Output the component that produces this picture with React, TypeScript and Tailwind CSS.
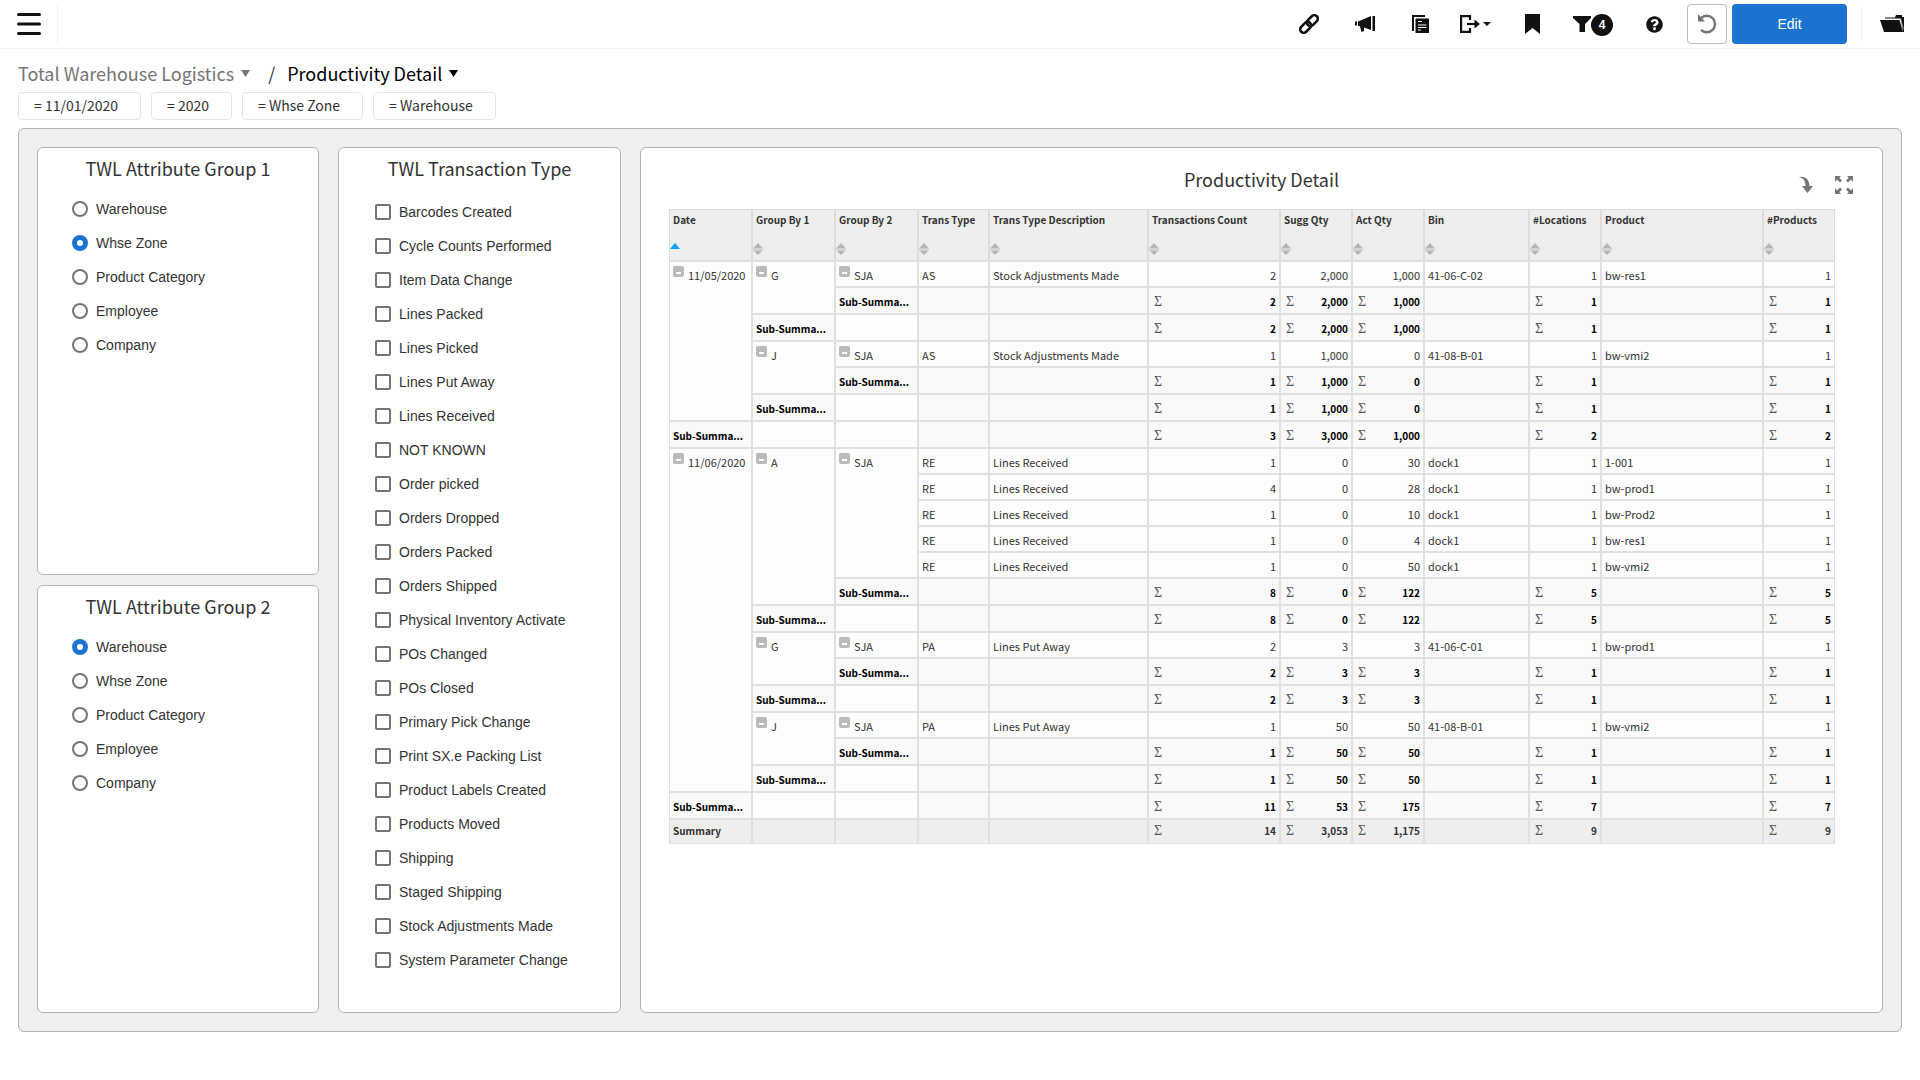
import { Fragment, type ReactNode } from "react";
import { FaQuestionCircle } from "react-icons/fa";

type Line = {
  type: string;
  description: string;
  count: number;
  sugg: number;
  act: number;
  bin: string;
  product: string;
};

type Group = {
  name: string;
  employee: string;
  lines: Line[];
};

type Day = {
  date: string;
  groups: Group[];
};

const chips = ["= 11/01/2020", "= 2020", "= Whse Zone", "= Warehouse"];

const attributes = [
  "Warehouse",
  "Whse Zone",
  "Product Category",
  "Employee",
  "Company",
];

const transactionTypes = [
  "Barcodes Created",
  "Cycle Counts Performed",
  "Item Data Change",
  "Lines Packed",
  "Lines Picked",
  "Lines Put Away",
  "Lines Received",
  "NOT KNOWN",
  "Order picked",
  "Orders Dropped",
  "Orders Packed",
  "Orders Shipped",
  "Physical Inventory Activate",
  "POs Changed",
  "POs Closed",
  "Primary Pick Change",
  "Print SX.e Packing List",
  "Product Labels Created",
  "Products Moved",
  "Shipping",
  "Staged Shipping",
  "Stock Adjustments Made",
  "System Parameter Change",
];

const columns = [
  { label: "Date", width: "w-[83px]" },
  { label: "Group By 1", width: "w-[83px]" },
  { label: "Group By 2", width: "w-[83px]" },
  { label: "Trans Type", width: "w-[71px]" },
  { label: "Trans Type Description", width: "w-[159px]" },
  { label: "Transactions Count", width: "w-[132px]" },
  { label: "Sugg Qty", width: "w-[72px]" },
  { label: "Act Qty", width: "w-[72px]" },
  { label: "Bin", width: "w-[105px]" },
  { label: "#Locations", width: "w-[72px]" },
  { label: "Product", width: "w-[162px]" },
  { label: "#Products", width: "w-[72px]" },
];

const received = {
  type: "RE",
  description: "Lines Received",
  sugg: 0,
  bin: "dock1",
};

const days: Day[] = [
  {
    date: "11/05/2020",
    groups: [
      {
        name: "G",
        employee: "SJA",
        lines: [
          { type: "AS", description: "Stock Adjustments Made", count: 2, sugg: 2000, act: 1000, bin: "41-06-C-02", product: "bw-res1" },
        ],
      },
      {
        name: "J",
        employee: "SJA",
        lines: [
          { type: "AS", description: "Stock Adjustments Made", count: 1, sugg: 1000, act: 0, bin: "41-08-B-01", product: "bw-vmi2" },
        ],
      },
    ],
  },
  {
    date: "11/06/2020",
    groups: [
      {
        name: "A",
        employee: "SJA",
        lines: [
          { ...received, count: 1, act: 30, product: "1-001" },
          { ...received, count: 4, act: 28, product: "bw-prod1" },
          { ...received, count: 1, act: 10, product: "bw-Prod2" },
          { ...received, count: 1, act: 4, product: "bw-res1" },
          { ...received, count: 1, act: 50, product: "bw-vmi2" },
        ],
      },
      {
        name: "G",
        employee: "SJA",
        lines: [
          { type: "PA", description: "Lines Put Away", count: 2, sugg: 3, act: 3, bin: "41-06-C-01", product: "bw-prod1" },
        ],
      },
      {
        name: "J",
        employee: "SJA",
        lines: [
          { type: "PA", description: "Lines Put Away", count: 1, sugg: 50, act: 50, bin: "41-08-B-01", product: "bw-vmi2" },
        ],
      },
    ],
  },
];

const fmt = (n: number) => n.toLocaleString("en-US");

const sum = (lines: Line[], key: "count" | "sugg" | "act") =>
  lines.reduce((total, line) => total + line[key], 0);

const dayLines = (day: Day) => day.groups.flatMap((g) => g.lines);

function Card({
  children,
  className = "",
}: {
  children: ReactNode;
  className?: string;
}) {
  return (
    <section
      className={`rounded-md border border-[#b3b3b3] bg-white ${className}`}
    >
      {children}
    </section>
  );
}

function RadioCard({
  title,
  name,
  selected,
}: {
  title: string;
  name: string;
  selected: string;
}) {
  return (
    <Card className="flex-1 pt-2">
      <h2 className="mb-3 text-center text-[18px] leading-6">{title}</h2>
      <div role="radiogroup" aria-label={title} className="pl-[34px]">
        {attributes.map((item) => (
          <label
            key={item}
            className="flex h-[34px] items-center gap-2 font-['Liberation_Sans',sans-serif] text-sm"
          >
            <input
              type="radio"
              name={name}
              defaultChecked={item === selected}
              className="size-4 appearance-none rounded-full border-2 border-[#757575] bg-white checked:border-5 checked:border-[#1a74cf]"
            />
            {item}
          </label>
        ))}
      </div>
    </Card>
  );
}

function TransactionCard() {
  return (
    <Card className="pt-2">
      <h2 className="mb-[15px] text-center text-[18px] leading-6">
        TWL Transaction Type
      </h2>
      <div className="pl-9">
        {transactionTypes.map((item) => (
          <label
            key={item}
            className="flex h-[34px] items-center gap-2 font-['Liberation_Sans',sans-serif] text-sm"
          >
            <input
              type="checkbox"
              className="size-4 appearance-none rounded-xs border-2 border-[#757575] bg-white checked:bg-[#1a74cf]"
            />
            {item}
          </label>
        ))}
      </div>
    </Card>
  );
}

function SortIcon({ active }: { active: boolean }) {
  if (active) {
    return (
      <svg width="10" height="12" viewBox="0 0 10 12" fill="#009ffb">
        <path d="M5 0 10 6H0z" />
      </svg>
    );
  }
  return (
    <svg width="10" height="12" viewBox="0 0 10 12" fill="#b5b5b5">
      <path d="M5 0 9.500 5H.5zM0 5.500h10v1H0zM.5 7.500h9L5 12z" />
    </svg>
  );
}

function Cell({
  children,
  className = "",
  rowSpan,
}: {
  children?: ReactNode;
  className?: string;
  rowSpan?: number;
}) {
  return (
    <td
      rowSpan={rowSpan}
      className={`overflow-hidden border border-[#e0e0e0] px-[3px] pt-0.5 whitespace-nowrap ${className}`}
    >
      {children}
    </td>
  );
}

function GroupCell({ label, rowSpan }: { label: string; rowSpan: number }) {
  return (
    <Cell rowSpan={rowSpan} className="bg-[#fdfdfd] align-top">
      <div className="flex items-start gap-1 pt-0.5">
        <button
          type="button"
          aria-label={`Collapse ${label}`}
          className="flex size-[11px] items-end justify-center rounded-xs bg-[#bbb] pb-[3px]"
        >
          <span className="h-0.5 w-[5px] bg-white" />
        </button>
        <span className="pt-px leading-4">{label}</span>
      </div>
    </Cell>
  );
}

function TotalCell({ value }: { value: number }) {
  return (
    <Cell>
      <div className="flex items-center justify-between pl-0.5">
        <span className="font-['Liberation_Serif',serif] text-sm leading-4 font-normal text-[#555]">
          Σ
        </span>
        <span>{fmt(value)}</span>
      </div>
    </Cell>
  );
}

function Totals({ lines }: { lines: Line[] }) {
  return (
    <>
      <Cell />
      <Cell />
      <TotalCell value={sum(lines, "count")} />
      <TotalCell value={sum(lines, "sugg")} />
      <TotalCell value={sum(lines, "act")} />
      <Cell />
      <TotalCell value={lines.length} />
      <Cell />
      <TotalCell value={lines.length} />
    </>
  );
}

const subRow = "h-[27px] bg-[#f9f9f9] font-bold text-black";

function DayRows({ day }: { day: Day }) {
  const lines = dayLines(day);
  // each group adds its own two sub-summary rows
  const daySpan = lines.length + day.groups.length * 2;

  return (
    <>
      {day.groups.map((group, gi) => (
        <Fragment key={group.name}>
          {group.lines.map((line, li) => (
            <tr
              key={line.product}
              className="h-[26px] bg-[#fdfdfd] text-[11px]"
            >
              {gi === 0 && li === 0 && (
                <GroupCell label={day.date} rowSpan={daySpan} />
              )}
              {li === 0 && (
                <GroupCell label={group.name} rowSpan={group.lines.length + 1} />
              )}
              {li === 0 && (
                <GroupCell label={group.employee} rowSpan={group.lines.length} />
              )}
              <Cell>{line.type}</Cell>
              <Cell>{line.description}</Cell>
              <Cell className="text-right">{line.count}</Cell>
              <Cell className="text-right">{fmt(line.sugg)}</Cell>
              <Cell className="text-right">{fmt(line.act)}</Cell>
              <Cell>{line.bin}</Cell>
              <Cell className="text-right">1</Cell>
              <Cell>{line.product}</Cell>
              <Cell className="text-right">1</Cell>
            </tr>
          ))}
          <tr className={subRow}>
            <Cell>Sub-Summa...</Cell>
            <Totals lines={group.lines} />
          </tr>
          <tr className={subRow}>
            <Cell>Sub-Summa...</Cell>
            <Cell className="bg-[#fdfdfd]" />
            <Totals lines={group.lines} />
          </tr>
        </Fragment>
      ))}
      <tr className={subRow}>
        <Cell>Sub-Summa...</Cell>
        <Cell className="bg-[#fdfdfd]" />
        <Cell className="bg-[#fdfdfd]" />
        <Totals lines={lines} />
      </tr>
    </>
  );
}

function ProductivityTable() {
  return (
    <table className="w-full table-fixed border-separate border-spacing-0 text-[10px] leading-4">
      <thead>
        <tr className="h-[52px] bg-[#eee]">
          {columns.map((col, i) => (
            <th
              key={col.label}
              scope="col"
              className={`border border-[#dcdcdc] p-0 text-left align-top font-bold whitespace-nowrap ${col.width}`}
            >
              <div className="px-[3px] pt-0.5">{col.label}</div>
              <button
                type="button"
                aria-label={`Sort by ${col.label}`}
                className="mt-[15px] block"
              >
                <SortIcon active={i === 0} />
              </button>
            </th>
          ))}
        </tr>
      </thead>
      <tbody>
        {days.map((day) => (
          <DayRows key={day.date} day={day} />
        ))}
      </tbody>
      <tfoot>
        <tr className="h-[25px] bg-[#eee] font-bold [&>td]:pt-0 [&>td]:pb-0.5">
          <Cell>Summary</Cell>
          <Cell />
          <Cell />
          <Totals lines={days.flatMap(dayLines)} />
        </tr>
      </tfoot>
    </table>
  );
}

function DetailCard() {
  return (
    <Card className="min-w-0 px-7 pt-[19px]">
      <div className="grid h-[42px] grid-cols-[1fr_auto_1fr]">
        <h2 className="col-start-2 text-[18px] leading-6">
          Productivity Detail
        </h2>
        <div className="flex items-start justify-end gap-[22px] pt-[9px] pr-px">
          <button type="button" aria-label="Drill down">
            <svg width="14" height="18" viewBox="0 0 14 18" fill="#757575">
              <path d="M0 1c6-1 10 2 10.500 9H14l-5.500 7L3 10h3.500C6.500 5 4.500 2 0 1z" />
            </svg>
          </button>
          <button type="button" aria-label="Full screen">
            <svg width="18" height="18" viewBox="0 0 18 18" fill="#757575">
              <path d="M0 0h6L4.300 1.700 7 4.400 5 6.500 2 3.600 0 6zM18 0h-6l1.700 1.700L11 4.400l2 2.100 3-2.900L18 6zM0 18h6l-1.700-1.700L7 13.600l-2-2.100-3 2.900L0 12zM18 18h-6l1.700-1.700L11 13.600l2-2.100 3 2.900 2-2.400z" />
            </svg>
          </button>
        </div>
      </div>
      <div className="pr-[19px]">
        <ProductivityTable />
      </div>
    </Card>
  );
}

function Toolbar() {
  return (
    <header className="flex h-[49px] items-center border-b border-[#f3f3f3] text-[#111]">
      <div className="flex h-10 w-[58px] items-center border-r border-[#f3f3f3] pl-[17px]">
        <button type="button" aria-label="Menu">
          <svg width="24" height="22" viewBox="0 0 24 22" stroke="#111" strokeWidth="3" strokeLinecap="round">
            <path d="M1.500 1.500h21M1.500 11h21M1.500 20.500h21" />
          </svg>
        </button>
      </div>

      <div className="ml-auto flex items-center">
        <button type="button" aria-label="Copy link" className="mr-9">
          <svg width="20" height="20" viewBox="0 0 20 20" fill="none" stroke="currentColor" strokeWidth="2.600">
            <g transform="rotate(-45 10 10)">
              <rect x="-1" y="6.500" width="12.500" height="7" rx="3.500" />
              <rect x="8.500" y="6.500" width="12.500" height="7" rx="3.500" />
            </g>
          </svg>
        </button>
        <button type="button" aria-label="Announcements" className="mr-[37px]">
          <svg width="20" height="18" viewBox="0 0 20 18" fill="currentColor">
            <path d="M0 6.500h2v4H0zM3 6.500 16 1v14L9 12.500V16L6.500 17 5 11.500l-2-1zM17.500 1H20v15h-2.500z" />
          </svg>
        </button>
        <button type="button" aria-label="Copy" className="mr-[31px]">
          <svg width="17" height="18" viewBox="0 0 17 18" fill="currentColor">
            <path d="M0 0h13v2H2v14H0z" />
            <path d="M3.500 3.500H17V18H3.500z" />
            <path d="M6 6.500h4M6 10h8.500M6 12.500h8.500M6 15h3" stroke="#fff" strokeWidth="1" />
          </svg>
        </button>
        <button
          type="button"
          aria-label="Export"
          className="mr-[34px] flex items-center gap-[3px]"
        >
          <svg width="20" height="18" viewBox="0 0 20 18" fill="none" stroke="currentColor" strokeWidth="2.200">
            <path d="M10 5V1.100H1.100v15.800H10V13" />
            <path d="M7 9h10" />
            <path d="M14.500 4.500 20 9l-5.500 4.500z" fill="currentColor" stroke="none" />
          </svg>
          <svg width="8" height="4" viewBox="0 0 8 4" fill="currentColor">
            <path d="M0 0h8L4 4z" />
          </svg>
        </button>
        <button type="button" aria-label="Bookmark" className="mr-[33px]">
          <svg width="15" height="20" viewBox="0 0 15 20" fill="currentColor">
            <path d="M0 0h15v20l-7.500-6L0 20z" />
          </svg>
        </button>
        <button
          type="button"
          aria-label="Filters, 4 applied"
          className="mr-[33px] flex items-center"
        >
          <svg width="18" height="16" viewBox="0 0 18 16" fill="currentColor">
            <path d="M0 0h18v2l-6 6v8H6.500V8L0 2z" />
          </svg>
          <span className="mt-0.5 flex size-[22px] items-center justify-center rounded-full bg-[#111] font-['Liberation_Sans',sans-serif] text-xs font-bold text-white">
            4
          </span>
        </button>
        <button type="button" aria-label="Help" className="mr-6">
          <FaQuestionCircle size={17} />
        </button>
        <button
          type="button"
          aria-label="Reset"
          className="mr-[5px] flex size-10 items-center justify-center rounded-sm border border-[#bbb] text-[#757575]"
        >
          <svg width="20" height="20" viewBox="0 0 20 20" fill="none" stroke="currentColor" strokeWidth="2.400">
            <path d="M4 4.200A8.200 8.200 0 1 1 4 15.800" />
            <path d="M1 0v7.500h7z" fill="currentColor" stroke="none" />
          </svg>
        </button>
        <button
          type="button"
          className="h-10 w-[115px] rounded-sm bg-[#1a74cf] font-['Liberation_Sans',sans-serif] text-sm text-white"
        >
          Edit
        </button>
        <div className="ml-[14px] flex h-10 items-center border-l border-[#f3f3f3] pr-4 pl-[18px]">
          <button type="button" aria-label="Open folder">
            <svg width="24" height="18" viewBox="0 0 24 18" fill="currentColor">
              <path d="M0 5h19.500L23 17H4z" />
              <path d="M5 4V2.500h10L16 0h6v2h2v15h-1L20.500 4z" />
              <path d="M5 3.700h15.500L23.300 14" fill="none" stroke="#fff" strokeWidth=".6" />
            </svg>
          </button>
        </div>
      </div>
    </header>
  );
}

function Caret() {
  return (
    <svg width="9" height="7" viewBox="0 0 9 7" fill="currentColor">
      <path d="M0 0h9L4.500 7z" />
    </svg>
  );
}

export default function App() {
  return (
    <div className="flex min-h-screen flex-col bg-white pb-12 font-['Noto_Sans_CJK_SC',sans-serif] text-[#333]">
      <Toolbar />

      <nav
        aria-label="Breadcrumb"
        className="mt-3 ml-[18px] flex h-6 items-center text-[18px] leading-6"
      >
        <button type="button" className="flex items-center gap-[7px] text-[#757575]">
          Total Warehouse Logistics
          <Caret />
        </button>
        <span className="mr-3 ml-[18px]">/</span>
        <button type="button" className="flex items-center gap-[7px] text-black">
          Productivity Detail
          <Caret />
        </button>
      </nav>

      <div className="mt-[7px] ml-[18px] flex gap-[10px]">
        {chips.map((chip) => (
          <button
            key={chip}
            type="button"
            className="h-7 rounded-sm border border-[#e5e5e5] pr-[22px] pb-0.5 pl-[15px] text-[14px] leading-6"
          >
            {chip}
          </button>
        ))}
      </div>

      <main className="mx-[18px] mt-2 grid flex-1 grid-cols-[282fr_283fr_1243fr] gap-[19px] rounded-md border border-[#b3b3b3] bg-[#efefef] p-[18px]">
        <div className="flex flex-col gap-[10px]">
          <RadioCard
            title="TWL Attribute Group 1"
            name="group1"
            selected="Whse Zone"
          />
          <RadioCard
            title="TWL Attribute Group 2"
            name="group2"
            selected="Warehouse"
          />
        </div>
        <TransactionCard />
        <DetailCard />
      </main>
    </div>
  );
}
